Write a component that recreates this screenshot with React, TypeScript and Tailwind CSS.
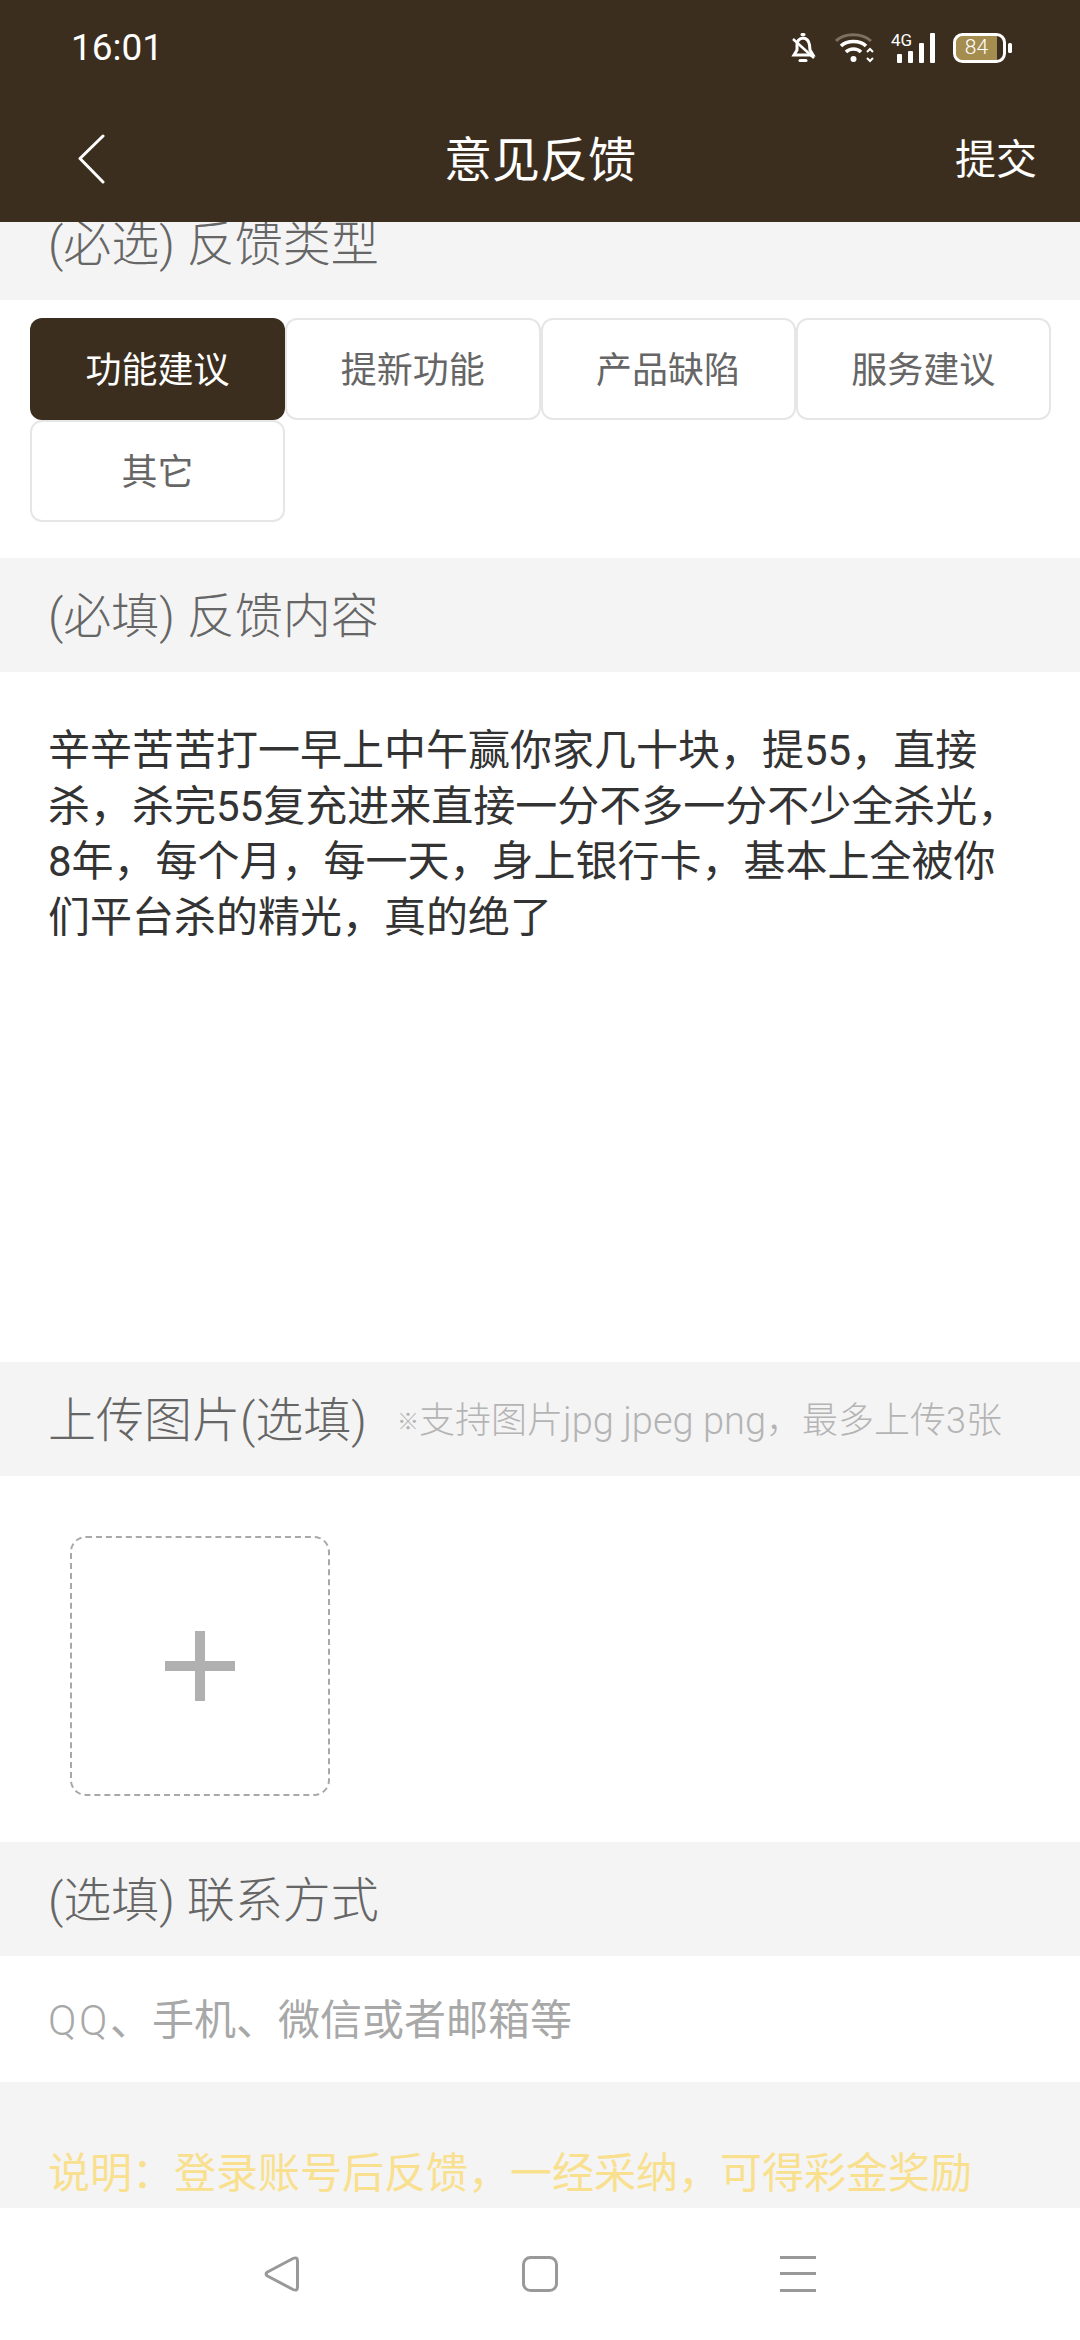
const sans = "font-['Roboto','Noto_Sans_CJK_SC',sans-serif]";

function SectionTitle({ children, className = "" }: { children: React.ReactNode; className?: string }) {
  return (
    <div className={`flex h-[114px] items-center bg-[#f4f4f4] pl-[48px] pt-[4px] text-[48px] font-light text-[#666666] ${className}`}>
      {children}
    </div>
  );
}

function Chip({ label, active = false }: { label: string; active?: boolean }) {
  return (
    <div
      className={`flex h-[102px] w-[255.250px] items-center justify-center rounded-[12px] pt-[3px] text-[36px] font-normal ${
        active ? "bg-[#3c2e1e] text-white" : "border-2 border-[#e6e6e6] bg-white text-[#666666]"
      }`}
    >
      {label}
    </div>
  );
}

function Bell() {
  return (
    <svg width="26" height="30" viewBox="0 0 26 30" fill="none" stroke="white" strokeWidth="3">
      <path d="M4 22 L7 17 V12 C7 8 9.500 5.500 13 5 C17 5.500 19 8 19.500 12 L20 17 L23 22 Z" />
      <path d="M12 1.500 h2" strokeLinecap="round" />
      <path d="M10 27.500 h6" strokeWidth="3" strokeLinecap="round" />
      <path d="M3 6 L24 25" strokeWidth="2.500" />
    </svg>
  );
}

function Wifi() {
  return (
    <svg width="40" height="30" viewBox="0 0 40 30" fill="none" strokeLinecap="butt">
      <path d="M1 8 C9 -0.500 27 -0.500 36 8" stroke="#7b7062" strokeWidth="3" />
      <path d="M6 13 C12 7 25 7 31 13" stroke="white" strokeWidth="3.500" />
      <path d="M11 19 C15 15 22 15 26 19" stroke="white" strokeWidth="3.500" />
      <circle cx="18.500" cy="26" r="3" fill="white" />
      <path d="M32 19 L35 16 L38 19 M32 25 L35 28 L38 25" stroke="white" strokeWidth="2" />
    </svg>
  );
}

function Signal() {
  return (
    <div className="relative h-[30px] w-[44px]">
      <span className="absolute left-0 top-[-1px] text-[17px] leading-[17px] text-white font-['Roboto',sans-serif]">4G</span>
      <svg className="absolute left-0 top-0" width="44" height="30" viewBox="0 0 44 30" fill="white">
        <rect x="6" y="21" width="5" height="9" rx="1" />
        <rect x="17" y="18" width="5" height="12" rx="1" />
        <rect x="28" y="10" width="5" height="20" rx="1" />
        <rect x="39" y="0" width="5" height="30" rx="1" />
      </svg>
    </div>
  );
}

function Battery() {
  return (
    <div className="relative h-[30px] w-[59px]">
      <svg className="absolute left-0 top-0" width="59" height="30" viewBox="0 0 59 30" fill="none">
        <path d="M9 3 H44 V27 H9 A6 6 0 0 1 3 21 V9 A6 6 0 0 1 9 3 Z" fill="#a58c4f" />
        <rect x="1.500" y="1.500" width="50" height="27" rx="8" stroke="white" strokeWidth="3" />
        <rect x="55" y="10" width="4" height="10" rx="1.500" fill="white" />
      </svg>
      <span className="absolute left-[3px] top-0 flex h-[30px] w-[41px] items-center justify-center text-[21px] font-light text-white font-['Roboto',sans-serif]">
        84
      </span>
    </div>
  );
}

export default function App() {
  return (
    <div className={`flex h-[2340px] w-[1080px] flex-col overflow-hidden bg-white ${sans}`}>
      <header className="relative z-10 h-[222px] bg-[#3c2e1e] text-white">
        <div className="flex h-[96px] items-center justify-between pl-[71px] pr-[68px]">
          <span className="text-[37px] font-normal">16:01</span>
          <div className="flex items-center">
            <Bell />
            <div className="ml-[19px]"><Wifi /></div>
            <div className="ml-[16px]"><Signal /></div>
            <div className="ml-[18px]"><Battery /></div>
          </div>
        </div>
        <div className="relative flex h-[126px] items-center justify-between pl-[77px] pr-[43px]">
          <svg width="28" height="50" viewBox="0 0 28 50" fill="none" stroke="white" strokeWidth="3" strokeLinecap="round" strokeLinejoin="round">
            <path d="M26 2 L3 24.500 L26 48" />
          </svg>
          <span className="absolute inset-x-0 pt-[4px] text-center text-[48px] font-normal">意见反馈</span>
          <span className="pt-[4px] text-[41px] font-normal">提交</span>
        </div>
      </header>

      <SectionTitle className="-mt-[36px]">(必选) 反馈类型</SectionTitle>
      <section className="flex h-[258px] flex-wrap content-start pl-[30px] pt-[18px]">
        <Chip label="功能建议" active />
        <Chip label="提新功能" />
        <Chip label="产品缺陷" />
        <Chip label="服务建议" />
        <Chip label="其它" />
      </section>

      <SectionTitle>(必填) 反馈内容</SectionTitle>
      <section className="h-[690px] whitespace-nowrap pl-[48px] pt-[51px] text-[42px] leading-[55.700px] font-normal text-[#333333]">
        辛辛苦苦打一早上中午赢你家几十块，提55，直接<br />
        杀，杀完55复充进来直接一分不多一分不少全杀光，<br />
        8年，每个月，每一天，身上银行卡，基本上全被你<br />
        们平台杀的精光，真的绝了
      </section>

      <SectionTitle>
        上传图片(选填)
        <span className="ml-[30px] flex items-center text-[36px] text-[#b4b4b4]">
          <span className="text-[22px]">※</span>
          支持图片<span className="text-[38px]">jpg jpeg png</span>，最多上传3张
        </span>
      </SectionTitle>
      <section className="h-[366px] pl-[70px] pt-[60px]">
        <div className="relative flex h-[260px] w-[260px] items-center justify-center rounded-[16px] border-2 border-dashed border-[#a8a8a8]">
          <div className="absolute h-[70px] w-[10px] bg-[#b0b0b0]" />
          <div className="absolute h-[10px] w-[70px] bg-[#b0b0b0]" />
        </div>
      </section>

      <SectionTitle>(选填) 联系方式</SectionTitle>
      <section className="flex h-[126px] items-center pl-[48px] pt-[3px] text-[42px] font-normal text-[#a8a8a8]">
        <span className="font-light tracking-[2.500px]">QQ</span>、手机、微信或者邮箱等
      </section>
      <section className="h-[126px] bg-[#f4f4f4] pl-[48px] pt-[64px] text-[42px] leading-[56px] font-normal text-[#f8e08e]">
        说明：登录账号后反馈，一经采纳，可得彩金奖励
      </section>

      <nav className="flex h-[132px] items-start justify-center gap-[222px] bg-white pt-[48px]">
        <svg width="36" height="36" viewBox="0 0 36 36" fill="none" stroke="#999999" strokeWidth="3" strokeLinejoin="round">
          <path d="M29 2.500 Q33.500 0.500 33.500 5 V31 Q33.500 35.500 29 33.500 L3.500 20 Q0.500 18 3.500 16 Z" />
        </svg>
        <svg width="36" height="36" viewBox="0 0 36 36" fill="none" stroke="#999999" strokeWidth="3">
          <rect x="1.500" y="1.500" width="33" height="33" rx="7" />
        </svg>
        <svg width="36" height="36" viewBox="0 0 36 36" fill="#999999">
          <rect x="0" y="0" width="36" height="3" />
          <rect x="0" y="16" width="36" height="3" />
          <rect x="0" y="33" width="36" height="3" />
        </svg>
      </nav>
    </div>
  );
}
